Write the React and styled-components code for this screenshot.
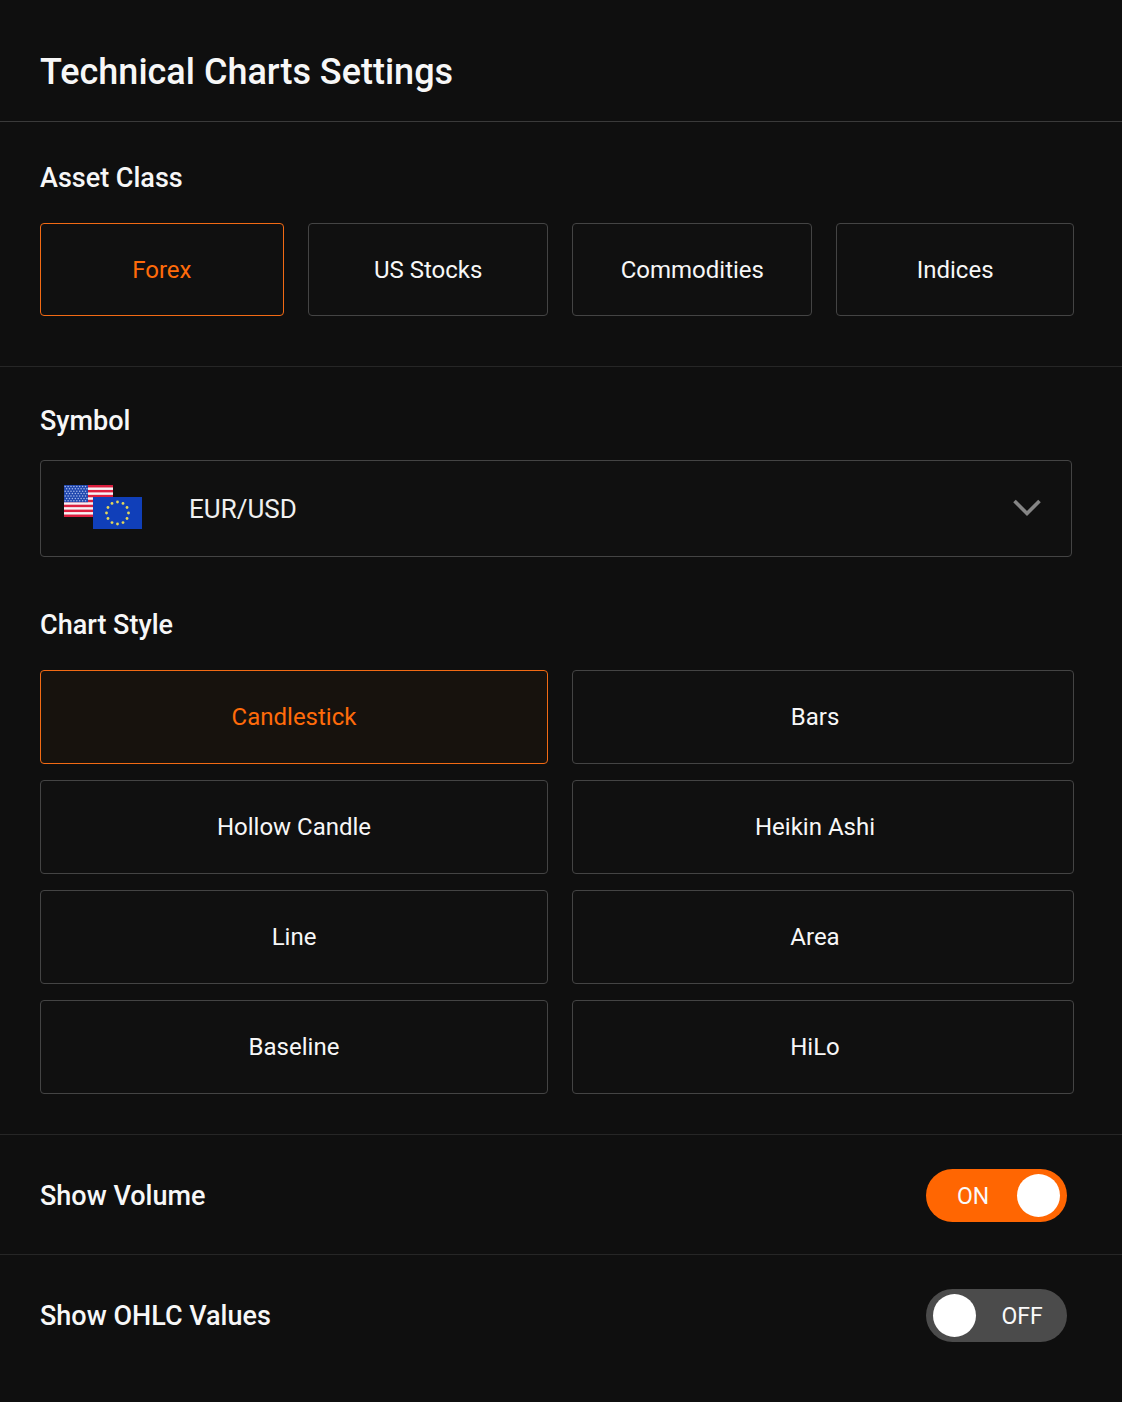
import React, { useState } from 'react';
import styled, { createGlobalStyle } from 'styled-components';

const ASSET_CLASSES = ['Forex', 'US Stocks', 'Commodities', 'Indices'];

const SYMBOLS = ['EUR/USD', 'GBP/USD', 'USD/JPY', 'AUD/USD'];

const CHART_STYLES = [
  'Candlestick',
  'Bars',
  'Hollow Candle',
  'Heikin Ashi',
  'Line',
  'Area',
  'Baseline',
  'HiLo',
];

const STRIPES = [0, 1, 2, 3, 4, 5, 6];
const STAR_ROWS = [0, 1, 2, 3, 4, 5, 6];
const STAR_COLS = [0, 1, 2, 3, 4, 5, 6, 7];
const EU_STARS = Array.from({ length: 12 }, (_, i) => {
  const angle = (i * Math.PI) / 6;
  return { x: 53.5 + 11 * Math.sin(angle), y: 28 - 11 * Math.cos(angle) };
});

const PairFlags = () => (
  <FlagsIcon viewBox="0 0 78 45" aria-hidden="true">
    <rect width="49" height="32" fill="#f7f3f6" />
    {STRIPES.map((i) => (
      <rect key={i} y={(i * 64) / 13} width="49" height={32 / 13} fill="#dc1f3f" />
    ))}
    <rect width="24" height="17.2" fill="#2148ae" />
    {STAR_ROWS.map((row) =>
      STAR_COLS.map((col) => (
        <circle
          key={`${row}-${col}`}
          cx={1.2 + col * 2.9 + (row % 2) * 1.4}
          cy={1.4 + row * 2.4}
          r="0.75"
          fill="#a9bbec"
        />
      ))
    )}
    <rect x="29" y="12" width="49" height="32" fill="#103fb9" />
    {EU_STARS.map((star, i) => (
      <circle key={i} cx={star.x} cy={star.y} r="1.4" fill="#e3d75c" />
    ))}
  </FlagsIcon>
);

const Switch = ({ id, checked, onChange }) => (
  <Track $on={checked}>
    <SwitchInput
      id={id}
      type="checkbox"
      role="switch"
      checked={checked}
      onChange={(e) => onChange(e.target.checked)}
    />
    <SwitchText $on={checked}>{checked ? 'ON' : 'OFF'}</SwitchText>
    <Knob />
  </Track>
);

const App = () => {
  const [assetClass, setAssetClass] = useState('Forex');
  const [symbol, setSymbol] = useState('EUR/USD');
  const [chartStyle, setChartStyle] = useState('Candlestick');
  const [showVolume, setShowVolume] = useState(true);
  const [showOhlc, setShowOhlc] = useState(false);

  return (
    <Page>
      <GlobalStyle />
      <Header>
        <Title>Technical Charts Settings</Title>
      </Header>

      <AssetSection>
        <SectionTitle id="asset-class">Asset Class</SectionTitle>
        <AssetGrid role="group" aria-labelledby="asset-class">
          {ASSET_CLASSES.map((name) => (
            <OptionButton
              key={name}
              type="button"
              $active={name === assetClass}
              aria-pressed={name === assetClass}
              onClick={() => setAssetClass(name)}
            >
              {name}
            </OptionButton>
          ))}
        </AssetGrid>
      </AssetSection>

      <ChartSection>
        <SectionTitle as="label" htmlFor="symbol">Symbol</SectionTitle>
        <SelectBox>
          <Select id="symbol" value={symbol} onChange={(e) => setSymbol(e.target.value)}>
            {SYMBOLS.map((name) => (
              <option key={name}>{name}</option>
            ))}
          </Select>
          <PairFlags />
          <Chevron viewBox="0 0 28 18" aria-hidden="true">
            <path d="M1.5 2 L14 14.5 L26.5 2" />
          </Chevron>
        </SelectBox>

        <SectionTitle id="chart-style">Chart Style</SectionTitle>
        <StyleGrid role="group" aria-labelledby="chart-style">
          {CHART_STYLES.map((name) => (
            <OptionButton
              key={name}
              type="button"
              $active={name === chartStyle}
              $tinted
              aria-pressed={name === chartStyle}
              onClick={() => setChartStyle(name)}
            >
              {name}
            </OptionButton>
          ))}
        </StyleGrid>
      </ChartSection>

      <ToggleRow>
        <ToggleLabel htmlFor="show-volume">Show Volume</ToggleLabel>
        <Switch id="show-volume" checked={showVolume} onChange={setShowVolume} />
      </ToggleRow>
      <ToggleRow>
        <ToggleLabel htmlFor="show-ohlc">Show OHLC Values</ToggleLabel>
        <Switch id="show-ohlc" checked={showOhlc} onChange={setShowOhlc} />
      </ToggleRow>
    </Page>
  );
};

export default App;

// Styles
const GlobalStyle = createGlobalStyle`
  * {
    box-sizing: border-box;
  }

  body {
    margin: 0;
    background: #0f0f0f;
    color: #f7f7f7;
    font-family: Roboto, 'Liberation Sans', sans-serif;
  }

  button,
  select {
    font-family: inherit;
  }
`;

const Page = styled.main`
  min-height: 100vh;
`;

const Header = styled.header`
  padding: 48px 40px 25px;
  border-bottom: 1px solid #3a3a3a;
`;

const Title = styled.h1`
  margin: 0;
  font-size: 36px;
  line-height: 48px;
  font-weight: 500;
`;

const Section = styled.section`
  padding: 40px 48px 0 40px;
  border-bottom: 1px solid #262626;
`;

const AssetSection = styled(Section)`
  padding-bottom: 50px;
`;

const ChartSection = styled(Section)`
  padding-top: 38px;
  padding-bottom: 40px;
`;

const SectionTitle = styled.h2`
  display: block;
  margin: 0;
  font-size: 27px;
  line-height: 32px;
  font-weight: 500;
`;

const AssetGrid = styled.div`
  display: grid;
  grid-template-columns: 244fr 241fr 240fr 238fr;
  grid-auto-rows: 93px;
  gap: 24px;
  margin-top: 29px;
`;

const OptionButton = styled.button`
  padding: 0 12px;
  border: 1px solid ${(props) => (props.$active ? '#f26a14' : '#444444')};
  border-radius: 4px;
  background: ${(props) => (props.$active && props.$tinted ? '#17120d' : '#101010')};
  color: ${(props) => (props.$active ? '#ff6b0a' : '#f7f7f7')};
  font-size: 24px;
  line-height: 32px;
  cursor: pointer;

  &:hover {
    border-color: #f26a14;
  }
`;

const StyleGrid = styled.div`
  display: grid;
  grid-template-columns: 508fr 502fr;
  grid-auto-rows: 94px;
  gap: 16px 24px;
  margin-top: 29px;

  ${OptionButton}:nth-child(even) {
    padding-right: 28px;
  }
`;

const SelectBox = styled.div`
  position: relative;
  margin: 23px 2px 52px 0;
`;

const Select = styled.select`
  display: block;
  width: 100%;
  height: 97px;
  padding: 0 80px 0 148px;
  border: 1px solid #444444;
  border-radius: 4px;
  appearance: none;
  background: #101010;
  color: #f0f0f0;
  font-size: 26px;
  cursor: pointer;
`;

const FlagsIcon = styled.svg`
  position: absolute;
  top: 25px;
  left: 24px;
  width: 78px;
  height: 45px;
  pointer-events: none;
`;

const Chevron = styled.svg`
  position: absolute;
  top: 39px;
  right: 31px;
  width: 28px;
  height: 18px;
  fill: none;
  stroke: #858585;
  stroke-width: 3.6;
  pointer-events: none;
`;

const ToggleRow = styled.div`
  display: flex;
  align-items: center;
  justify-content: space-between;
  padding: 34px 55px 32px 40px;

  & + & {
    border-top: 1px solid #262626;
  }
`;

const ToggleLabel = styled.label`
  font-size: 27px;
  line-height: 32px;
  font-weight: 500;
  cursor: pointer;
`;

const Track = styled.span`
  position: relative;
  display: flex;
  flex-direction: ${(props) => (props.$on ? 'row' : 'row-reverse')};
  align-items: center;
  width: 141px;
  height: 53px;
  padding: 0 7px;
  border-radius: 27px;
  background: ${(props) => (props.$on ? '#ff6602' : '#4b4b4b')};
`;

// Covers the whole track so that a click anywhere on it counts
const SwitchInput = styled.input`
  position: absolute;
  inset: 0;
  width: 100%;
  height: 100%;
  margin: 0;
  opacity: 0;
  cursor: pointer;
`;

const SwitchText = styled.span`
  flex: 1;
  padding: ${(props) => (props.$on ? '2px 4px 0 0' : '2px 0 0 8px')};
  color: #fafafa;
  font-size: 23px;
  line-height: 28px;
  text-align: center;
`;

const Knob = styled.span`
  width: 43px;
  height: 43px;
  border-radius: 50%;
  background: #ffffff;
`;
